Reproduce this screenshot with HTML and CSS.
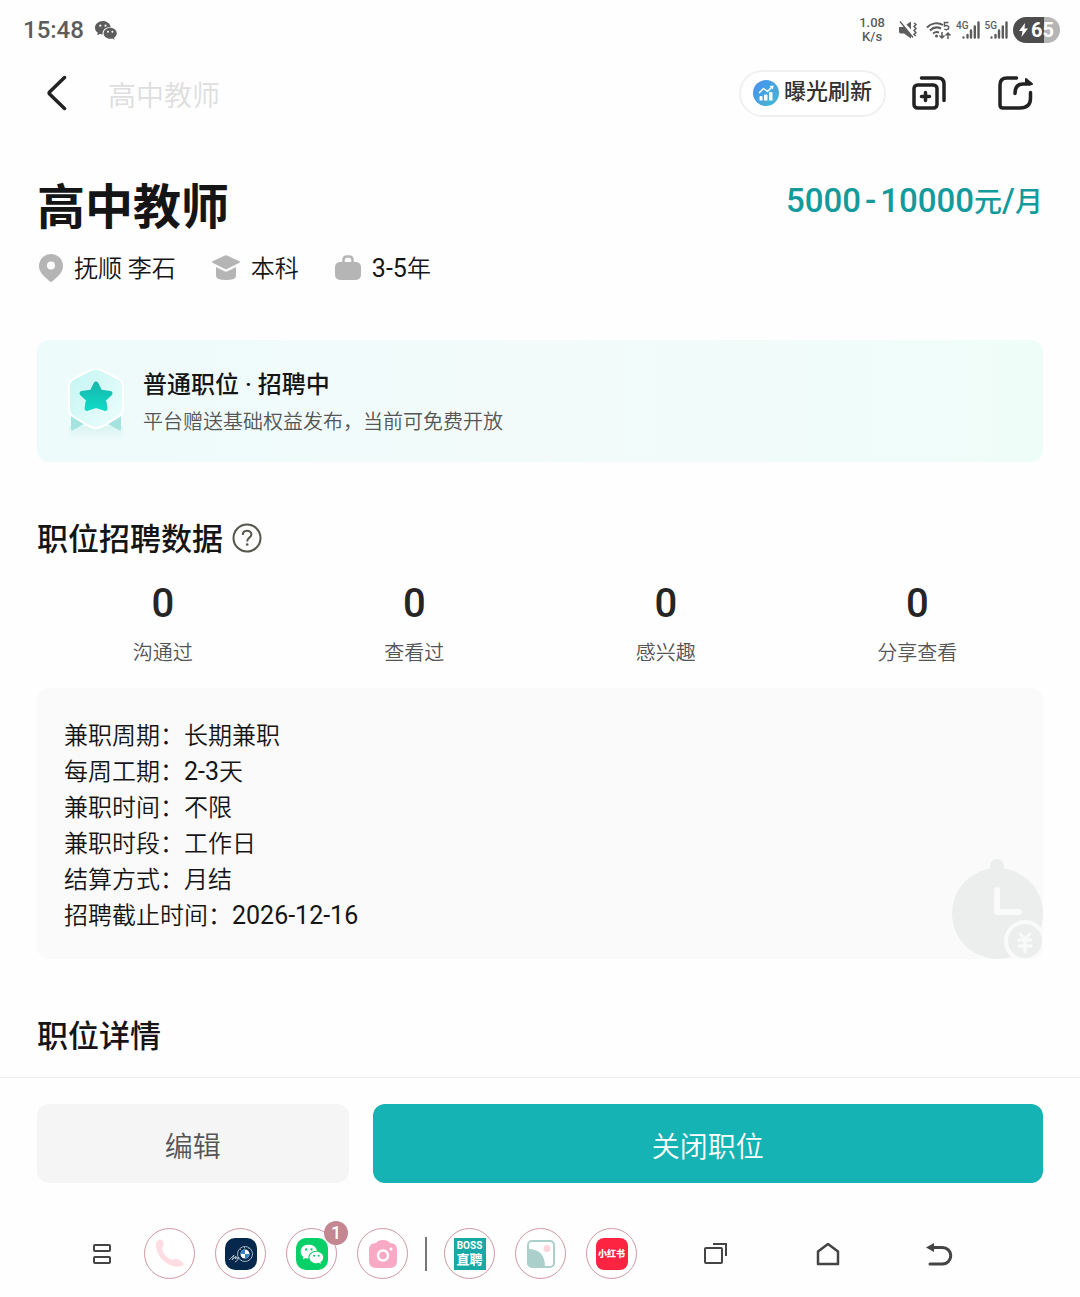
FILE: index.html
```html
<!DOCTYPE html>
<html lang="zh-CN">
<head>
<meta charset="utf-8">
<meta name="viewport" content="width=device-width, initial-scale=1">
<title>高中教师</title>
<link rel="stylesheet" href="styles.css">
</head>
<body>
<svg class="defs" width="0" height="0" aria-hidden="true">
  <symbol id="wechat" viewBox="0 0 22 19">
    <path fill="currentColor" fill-rule="evenodd" d="M8 0C3.500 0 0 3 0 6.700c0 2.100 1.100 3.900 2.800 5.100L2.200 14.300l2.700-1.400c1 .3 2 .5 2.700.5C7 9 10.500 5.900 15.700 5.900 15 2.400 11.700 0 8 0zM5.300 3.600a1.100 1.100 0 1 1 0 2.200 1.100 1.100 0 0 1 0-2.200zm5.200 0a1.100 1.100 0 1 1 0 2.200 1.100 1.100 0 0 1 0-2.200z"/>
    <path fill="currentColor" fill-rule="evenodd" d="M15.200 6.800c-3.700 0-6.600 2.500-6.600 5.500s2.900 5.500 6.600 5.500c.8 0 1.500-.1 2.200-.3l2.200 1.200-.6-1.900c1.700-1.100 2.800-2.700 2.800-4.500 0-3-2.900-5.500-6.600-5.500zM13 9.700a1 1 0 1 1 0 2 1 1 0 0 1 0-2zm4.400 0a1 1 0 1 1 0 2 1 1 0 0 1 0-2z"/>
  </symbol>
  <symbol id="signal" viewBox="0 0 18 18">
    <path fill="none" stroke="currentColor" stroke-width="2.400" stroke-linecap="round" d="M1.500 16.500v0M5.500 14v2.500M9 9.500v7M12.800 5.500v11M16.500 1.500v15"/>
  </symbol>
</svg>

<div class="status">
  <time>15:48</time>
  <svg class="status-chat" width="22" height="19"><use href="#wechat"/></svg>
  <div class="status-right">
    <span class="speed">1.08<br>K/s</span>
    <svg class="mute" width="18" height="18" viewBox="0 0 18 18" fill="none" stroke="currentColor">
      <path fill="currentColor" stroke="none" d="M0 6h4l1-1 7 9v3.500L5 12.500H1L0 11zM7.500 3.500 12 .5v8zM1.500 0l13 16-1 1L.5 1z"/>
      <path stroke-width="1.500" d="m15 2 2 1.500-2 2 2 2-2 2 2 2-2 2 2 1.500"/>
    </svg>
    <svg class="wifi" width="26" height="19" viewBox="0 0 26 19" fill="none" stroke="currentColor" stroke-width="2">
      <path d="M1 6.500C5 2 12 .8 17 4M4 9.500c3-3 7-4 11-2M7 12.500c2-1.600 4-1.900 6-1"/>
      <circle cx="10.500" cy="15" r="1.500" fill="currentColor" stroke="none"/>
      <path stroke-width="1.500" d="M16 11v6m-2.500-2.500L16 17l2.500-2.500M22 18v-6m-2.500 2.500L22 12l2.500 2.500M22.500 1.500h-4V5c3-1 4.500 0 4.200 2-.4 2-3 2-4.400 1"/>
    </svg>
    <span class="cell"><small>4G</small><svg width="18" height="18"><use href="#signal"/></svg></span>
    <span class="cell"><small>5G</small><svg width="18" height="18"><use href="#signal"/></svg></span>
    <span class="battery"><svg width="9" height="14" viewBox="0 0 9 14"><path fill="#fff" d="M6 0 0 8h3.500L2.500 14 9 5.500H5.500z"/></svg>65</span>
  </div>
</div>

<header class="topbar">
  <button class="icon-btn back" type="button" aria-label="返回">
    <svg width="20" height="36" viewBox="0 0 20 36"><path d="M17.500 2.500 2.800 16.700q-1.300 1.300 0 2.600L17.500 33.500" fill="none" stroke="#222" stroke-width="3.500" stroke-linecap="round"/></svg>
  </button>
  <span class="topbar-title">高中教师</span>
  <button class="pill" type="button">
    <svg width="26" height="26" viewBox="0 0 26 26">
      <defs><linearGradient id="blue" x1="0" y1="0" x2="1" y2="1"><stop offset="0" stop-color="#4a8df0"/><stop offset="1" stop-color="#3fbcd2"/></linearGradient></defs>
      <circle cx="13" cy="13" r="13" fill="url(#blue)"/>
      <path fill="none" stroke="#fff" stroke-width="1.500" stroke-linecap="round" stroke-linejoin="round" d="m6.500 12.500 4-4 4 3 5-5"/>
      <path fill="#fff" d="m16.500 6 4-.5-.5 4zM6.500 17a1 1 0 0 1 1-1h1a1 1 0 0 1 1 1v3.500h-3zM11 15.500a1 1 0 0 1 1-1h1.500a1 1 0 0 1 1 1v5H11zM16 13a1 1 0 0 1 1-1h1.500a1 1 0 0 1 1 1v7.500H16z"/>
    </svg>
    <span>曝光刷新</span>
  </button>
  <button class="icon-btn copy" type="button" aria-label="复制职位">
    <svg width="34" height="34" viewBox="0 0 34 34" fill="none" stroke="#222" stroke-width="3.500" stroke-linecap="round">
      <rect x="2" y="9" width="23" height="23" rx="3.500"/><path d="M9.500 2H26q6 0 6 6v16.500"/><path d="M13.500 16.500v8M9.500 20.500h8"/>
    </svg>
  </button>
  <button class="icon-btn share" type="button" aria-label="分享">
    <svg width="36" height="34" viewBox="0 0 36 34" fill="none" stroke="#222" stroke-width="3.500" stroke-linecap="round" stroke-linejoin="round">
      <path d="M18.500 2H9Q2 2 2 9v20q0 3 3 3h17q10.500 0 10.500-10v-5.500"/><path d="M17 17.500Q17 8 25 8h7"/><path fill="#222" stroke-width="2" d="m28 3 6 5h-6z"/>
    </svg>
  </button>
</header>

<main>
  <section class="job">
    <div class="job-head">
      <h1>高中教师</h1>
      <p class="salary">5000<i>-</i>10000<span>元</span>/<span>月</span></p>
    </div>
    <ul class="tags">
      <li><svg width="24" height="28" viewBox="0 0 24 28"><path fill="#b5b5b5" fill-rule="evenodd" d="M12 0a12 12 0 0 1 12 12c0 5-3 8.500-7 12l-3.500 3.300q-1.500 1.200-3 0L7 24c-4-3.500-7-7-7-12A12 12 0 0 1 12 0zm0 7.500a4 4 0 1 0 0 8 4 4 0 0 0 0-8z"/></svg><span>抚顺 李石</span></li>
      <li><svg width="28" height="26" viewBox="0 0 28 26"><path fill="#b5b5b5" d="M13 .5q1-.5 2 0l12.500 5.800q1 .7 0 1.400L15 14q-1 .5-2 0L.5 7.700q-1-.7 0-1.400zM4 12l8.500 4.300q1.500.7 3 0L24 12v9q0 4-10 4T4 21z"/></svg><span>本科</span></li>
      <li><svg width="26" height="26" viewBox="0 0 26 26"><rect y="7" width="26" height="18" rx="5" fill="#b5b5b5"/><path d="M8.500 9V5q0-3.500 3.500-3.500h2q3.500 0 3.500 3.500v4" fill="none" stroke="#b5b5b5" stroke-width="2.500"/></svg><span><b class="num">3-5</b>年</span></li>
    </ul>
  </section>

  <section class="banner">
    <svg width="60" height="72" viewBox="0 0 60 72">
      <defs>
        <linearGradient id="hex" x1="0" y1="0" x2="1" y2="1"><stop offset="0" stop-color="#c2f5f2"/><stop offset="1" stop-color="#effefd"/></linearGradient>
        <linearGradient id="star" x1="0" y1="0" x2="0" y2="1"><stop offset="0" stop-color="#16b9ad"/><stop offset="1" stop-color="#10d8c5"/></linearGradient>
        <linearGradient id="fade" x1="0" y1="0" x2="0" y2="1"><stop offset="0" stop-color="#d9f3f1"/><stop offset="1" stop-color="#d9f3f1" stop-opacity="0"/></linearGradient>
      </defs>
      <path fill="url(#fade)" d="M3 58h54v14H3z"/>
      <path fill="#a5e3e0" d="M5 47v14q0 2 2 1l13-7zM55 47v14q0 2-2 1l-13-7z"/>
      <path fill="url(#hex)" stroke="#fff" stroke-width="2" d="M24 2.500q6-3 12 0l16 8q5 3 5 8v23q0 4-4 7l-17 10q-6 3-12 0L7 48.500q-4-3-4-7v-23q0-5 5-8z"/>
      <path fill="url(#star)" stroke="url(#star)" stroke-width="5" stroke-linejoin="round" d="m30 16 4 8 10 1.500-6.500 6 1.500 9-9-3-9 3 1.500-9-6.500-6L26 24z"/>
    </svg>
    <div>
      <h2>普通职位 · 招聘中</h2>
      <p>平台赠送基础权益发布，当前可免费开放</p>
    </div>
  </section>

  <section>
    <h2 class="section-title">职位招聘数据
      <button class="icon-btn" type="button" aria-label="数据说明">
        <svg width="30" height="30" viewBox="0 0 30 30" fill="none" stroke="#55554c" stroke-width="2"><circle cx="15" cy="15" r="13.500"/><path d="M10.800 12c0-5.500 8.600-5.500 8.600-.5 0 3-4.200 3.200-4.200 7"/><circle cx="15.200" cy="21.500" r="1.300" fill="#55554c" stroke="none"/></svg>
      </button>
    </h2>
    <dl class="stats">
      <div><dt>沟通过</dt><dd>0</dd></div>
      <div><dt>查看过</dt><dd>0</dd></div>
      <div><dt>感兴趣</dt><dd>0</dd></div>
      <div><dt>分享查看</dt><dd>0</dd></div>
    </dl>
    <div class="terms">
      <ul>
        <li>兼职周期：长期兼职</li>
        <li>每周工期：<b class="num">2-3</b>天</li>
        <li>兼职时间：不限</li>
        <li>兼职时段：工作日</li>
        <li>结算方式：月结</li>
        <li>招聘截止时间：<b class="num">2026-12-16</b></li>
      </ul>
      <svg class="terms-clock" width="91" height="100" viewBox="0 0 91 100">
        <circle cx="45.500" cy="54.500" r="45.500" fill="#eceeee"/><rect x="38" width="14" height="20" rx="7" fill="#eceeee"/>
        <path d="M45 31v22h22" fill="none" stroke="#fafafa" stroke-width="6" stroke-linecap="round" stroke-linejoin="round"/>
        <circle cx="73" cy="82" r="19" fill="#eceeee" stroke="#fafafa" stroke-width="4"/>
        <path d="m68 75 5 5 5-5M73 80v13M67 81h12M67 87h12" fill="none" stroke="#fafafa" stroke-width="3" stroke-linecap="round"/>
      </svg>
    </div>
  </section>

  <section class="detail">
    <h2 class="section-title">职位详情</h2>
  </section>
</main>

<footer class="actions">
  <button class="edit" type="button">编辑</button>
  <button class="close-job" type="button">关闭职位</button>
</footer>

<nav class="dock" aria-label="任务栏">
  <button class="icon-btn" type="button" aria-label="全部应用">
    <svg width="20" height="20" viewBox="0 0 20 20" fill="none" stroke="#444" stroke-width="2"><rect x="2" y="1" width="16" height="6" rx="1"/><rect x="2" y="13" width="16" height="6" rx="1"/></svg>
  </button>
  <div class="apps">
    <button class="app" type="button" aria-label="电话"><svg width="32" height="32" viewBox="0 0 32 32"><path fill="#fddde2" d="M2 5q1-3.500 4-3.500t3.500 4q.3 3-1.500 5 1 8 10.500 11.500 3-2 6-.5l4 2.500q2.500 2 0 3.500-4 2-10 .5C9 25 1 15 2 5z"/></svg></button>
    <button class="app" type="button" aria-label="My BMW"><svg width="32" height="32" viewBox="0 0 32 32"><rect width="32" height="32" rx="10" fill="#06284c"/><circle cx="20" cy="16" r="7.500" fill="none" stroke="#9fb0c2" stroke-width="1"/><circle cx="20" cy="16" r="4.500" fill="#fff"/><path fill="#3484cb" d="M20 16v-4.500a4.500 4.500 0 0 0-4.500 4.500zM20 16v4.500a4.500 4.500 0 0 0 4.500-4.500z"/><path fill="none" stroke="#c6d1dc" stroke-width=".8" d="m4 22 5-5-2 5 4-4-1 3 2-2v2l2-2q-1 4-4 5M15 11l1 1m3.500-3v1.500m4 .5 1-1"/></svg></button>
    <button class="app" type="button" aria-label="微信，1 条消息"><svg width="32" height="32" viewBox="0 0 32 32" color="#fff"><rect width="32" height="32" rx="10" fill="#06d067"/><use href="#wechat" x="4.500" y="6.500" width="23" height="20"/></svg><span class="badge">1</span></button>
    <button class="app" type="button" aria-label="相机"><svg width="28" height="28" viewBox="0 0 28 28"><path fill="#f8a9c4" d="M7 3q2-3 7-3t7 3q7 0 7 7v11q0 7-7 7H7q-7 0-7-7V10q0-7 7-7z"/><circle cx="14" cy="15.500" r="5" fill="none" stroke="#fff" stroke-width="2.500"/><circle cx="22" cy="9" r="1.500" fill="#fff"/></svg></button>
  </div>
  <span class="divider"></span>
  <div class="apps">
    <button class="app" type="button" aria-label="BOSS直聘"><span class="boss"><b>BOSS</b><strong>直聘</strong></span></button>
    <button class="app" type="button" aria-label="相册"><svg width="28" height="28" viewBox="0 0 28 28"><path fill="#abd0cb" d="M1 9q17 0 17 18H6q-5 0-5-5z"/><rect x="1" y="1" width="26" height="26" rx="4" fill="none" stroke="#abd0cb" stroke-width="2"/><circle cx="20" cy="8.500" r="3.500" fill="#fbd6dd"/></svg></button>
    <button class="app" type="button" aria-label="小红书"><span class="red">小红书</span></button>
  </div>
  <div class="system">
    <button class="icon-btn" type="button" aria-label="最近任务"><svg width="28" height="24" viewBox="0 0 28 24" fill="none" stroke="#444" stroke-width="2"><rect x="3" y="6" width="17" height="15" rx="1"/><path d="M11 2h13v12"/></svg></button>
    <button class="icon-btn" type="button" aria-label="主屏幕"><svg width="28" height="24" viewBox="0 0 28 24" fill="none" stroke="#444" stroke-width="2.500" stroke-linejoin="round"><path d="M4 9.500 14 2l10 7.500V22H4z"/></svg></button>
    <button class="icon-btn" type="button" aria-label="返回上一页"><svg width="28" height="24" viewBox="0 0 28 24"><path d="M6 5.500h10.500a8 8 0 0 1 0 16.500H4" fill="none" stroke="#444" stroke-width="3" stroke-linecap="round"/><path fill="#444" d="m0 5.500 8-4.500v9z"/></svg></button>
  </div>
</nav>
</body>
</html>
```
FILE: styles.css
```css
* { box-sizing: border-box; }

body {
  margin: 0;
  min-height: 100vh;
  display: flex;
  flex-direction: column;
  background: #fefefe;
  color: #151515;
  font-family: Roboto, "Noto Sans CJK SC", sans-serif;
  font-size: 24px;
  font-weight: 350;
}

h1, h2, p, ul, dl, dd { margin: 0; padding: 0; }
ul { list-style: none; }
button { border: 0; padding: 0; font: inherit; color: inherit; cursor: pointer; }
svg { display: block; flex: none; }
.defs { position: absolute; }
.icon-btn { display: flex; background: none; }
.num { font-size: 25px; line-height: 30px; font-weight: 400; }

/* Status bar */
.status {
  display: flex;
  align-items: center;
  height: 60px;
  padding: 0 20px 0 23px;
  color: #5c5c5c;
  font-weight: 500;
}
.status-chat { margin-left: 11px; }
.status-right { display: flex; align-items: center; margin-left: auto; }
.speed { font-size: 13px; line-height: 14px; text-align: center; }
.mute { margin-left: 14px; }
.wifi { margin-left: 9px; }
.cell { display: flex; align-items: flex-start; margin-left: 4px; }
.cell + .cell { margin-left: 5px; }
.cell small { font-size: 10px; line-height: 10px; margin-right: -7px; }
.battery {
  display: flex;
  align-items: center;
  justify-content: center;
  gap: 3px;
  width: 47px;
  height: 26px;
  margin-left: 5px;
  border-radius: 13px;
  background: linear-gradient(90deg, #4d4d4d 65%, #b5b5b5 65%);
  color: #fff;
  font-size: 20px;
  font-weight: 700;
}

/* Top bar */
.topbar { display: flex; align-items: center; height: 66px; padding: 0 46px 0 47px; }
.topbar-title { margin-left: 41px; padding-top: 8px; font-size: 28px; line-height: 36px; color: #dedede; }
.pill {
  display: flex;
  align-items: center;
  gap: 5px;
  height: 47px;
  margin-left: auto;
  padding: 0 12px;
  border: 2px solid #f0f0f0;
  border-radius: 24px;
  background: #fff;
  color: #333;
  font-size: 22px;
  line-height: 28px;
  font-weight: 500;
}
.pill span { padding-bottom: 2px; }
.copy { margin-left: 26px; }
.share { margin-left: 52px; }

/* Job summary */
main { padding: 49px 37px 20px; }
.job-head { display: flex; justify-content: space-between; }
h1 { padding-top: 4px; font-size: 48px; line-height: 58px; font-weight: 700; }
.salary { color: #159a9c; font-size: 33px; line-height: 52px; font-weight: 500; }
.salary i { margin: 0 4px; font-style: normal; }
.salary span { font-size: 28px; }
.tags { display: flex; gap: 36px; margin-top: 14px; padding-left: 2px; line-height: 30px; }
.tags li { display: flex; align-items: center; gap: 11px; }
.tags span { padding-top: 3px; }

.banner {
  display: flex;
  align-items: center;
  gap: 17px;
  height: 122px;
  margin-top: 56px;
  padding: 6px 29px 0;
  border-radius: 12px;
  background: linear-gradient(90deg, #eefbfb, #f2fbfa 50%, #effdf9);
}
.banner h2 { font-size: 24px; line-height: 36px; font-weight: 500; }
.banner p { font-size: 20px; line-height: 38px; color: #555; }

.section-title {
  display: flex;
  align-items: center;
  gap: 9px;
  margin-top: 58px;
  font-size: 31px;
  line-height: 40px;
  font-weight: 500;
}
.section-title button { margin-bottom: 4px; }

.stats { display: grid; grid-template-columns: repeat(4, 1fr); margin-top: 24px; text-align: center; }
.stats div { display: flex; flex-direction: column-reverse; gap: 15px; }
.stats dd { font-size: 40px; line-height: 40px; font-weight: 500; color: #252525; }
.stats dt { font-size: 20px; line-height: 28px; color: #555; }

.terms {
  position: relative;
  margin-top: 21px;
  padding: 30px 27px 25px;
  border-radius: 12px;
  background: #fafafa;
  line-height: 36px;
  overflow: hidden;
}
.terms-clock { position: absolute; right: 0; bottom: 0; }

/* Bottom actions */
.actions { display: flex; gap: 24px; padding: 26px 37px 0; border-top: 1px solid #ededed; margin-top: auto; }
.actions button { height: 79px; padding-top: 2px; border-radius: 12px; font-size: 28px; }
.edit { flex: 312 1 0; background: #f5f5f5; color: #555; }
.close-job { flex: 671 1 0; background: #15b3b3; color: #fff; }

/* System dock */
.dock { display: flex; align-items: center; padding: 45px 36px 18px 92px; }
.apps { display: flex; gap: 20px; margin-left: 32px; }
.app {
  position: relative;
  display: flex;
  align-items: center;
  justify-content: center;
  width: 51px;
  height: 51px;
  border: 1px solid #cf98a3;
  border-radius: 50%;
  background: #fff;
}
.badge {
  position: absolute;
  top: -8px;
  right: -12px;
  width: 24px;
  height: 24px;
  border-radius: 50%;
  background: #c48791;
  color: #fff;
  font-size: 18px;
  font-weight: 500;
  line-height: 24px;
}
.divider { width: 2px; height: 34px; margin-left: 17px; background: #777; }
.divider + .apps { margin-left: 17px; }
.boss {
  display: flex;
  flex-direction: column;
  align-items: center;
  justify-content: center;
  width: 32px;
  height: 32px;
  background: #18a9a5;
  color: #fff;
}
.boss b { font-size: 10px; line-height: 12px; }
.boss strong { font-size: 13px; line-height: 15px; }
.red {
  width: 32px;
  height: 32px;
  border-radius: 8px;
  background: #fc2440;
  color: #fff;
  font-size: 9px;
  line-height: 32px;
  font-weight: 900;
}
.system { display: flex; gap: 84px; margin-left: 65px; }
```
